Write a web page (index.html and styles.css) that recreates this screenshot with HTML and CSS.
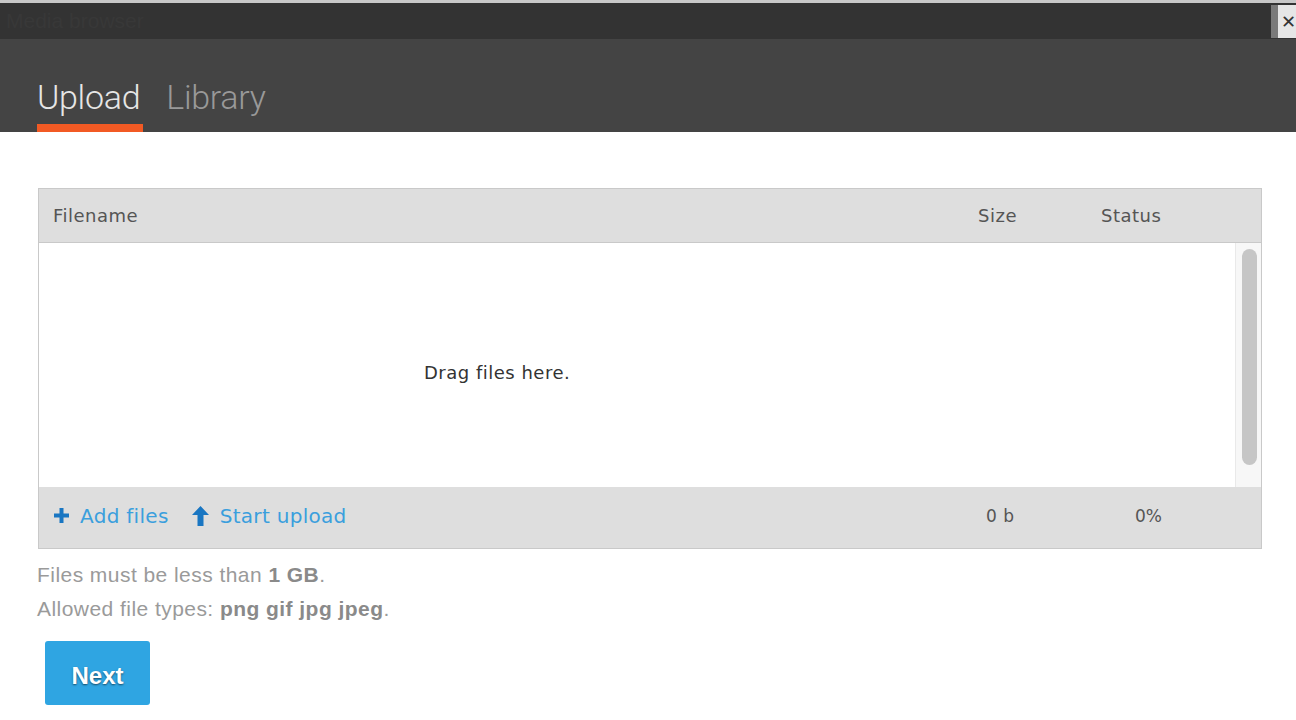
FILE: index.html
```html
<!DOCTYPE html>
<html>
<head>
<meta charset="utf-8">
<link rel="stylesheet" href="styles.css">
</head>
<body>
<div class="topline"></div>
<div class="titlebar">
  <span class="title">Media browser</span>
  <span class="close"><span class="close-x">✕</span></span>
</div>
<div class="header">
  <div class="tab active">Upload</div>
  <div class="tab">Library</div>
</div>
<div class="content">
  <div class="uploader">
    <div class="thead">
      <div class="col-name">Filename</div>
      <div class="col-size">Size</div>
      <div class="col-status">Status</div>
    </div>
    <div class="tbody">
      <div class="drop">Drag files here.</div>
      <div class="scrolltrack"><div class="thumb"></div></div>
    </div>
    <div class="tfoot">
      <div class="actions">
        <a class="action">
          <svg class="ico" width="15" height="15" viewBox="0 0 15 15"><path d="M5.5 0h4v5.5H15v4H9.5V15h-4V9.5H0v-4h5.5z" fill="#1976c2"/></svg>
          Add files
        </a>
        <a class="action">
          <svg class="ico" width="17" height="20" viewBox="0 0 17 20"><path d="M8.5 0L17 9H11.5V20H5.5V9H0z" fill="#1976c2"/></svg>
          Start upload
        </a>
      </div>
      <div class="foot-size">0 b</div>
      <div class="foot-status">0%</div>
    </div>
  </div>
  <p class="note">Files must be less than <b>1 GB</b>.</p>
  <p class="note">Allowed file types: <b>png gif jpg jpeg</b>.</p>
  <button class="next">Next</button>
</div>
</body>
</html>
```
FILE: styles.css
```css
html, body {
  margin: 0;
  padding: 0;
  background: #fff;
}
body {
  font-family: "Liberation Sans", Arial, sans-serif;
  overflow: hidden;
}
.topline {
  height: 3px;
  background: #c8c8c8;
}
.titlebar {
  height: 36px;
  background: #333;
  display: flex;
  justify-content: space-between;
  align-items: flex-start;
}
.title {
  color: #383838;
  font-size: 21px;
  line-height: 36px;
  padding-left: 6px;
}
.close {
  margin-top: 2px;
  width: 18px;
  height: 33px;
  border-left: 7px solid #7a7a7a;
  background: #e6e6e6;
  overflow: hidden;
  display: flex;
  align-items: center;
}
.close-x {
  font-family: "DejaVu Sans", sans-serif;
  font-weight: bold;
  font-size: 18px;
  color: #333;
  margin-left: 3px;
}
.header {
  height: 93px;
  background: #444;
  display: flex;
  align-items: flex-end;
  padding-left: 37px;
  gap: 23px;
  box-sizing: border-box;
}
.tab {
  font-family: Roboto, "Liberation Sans", sans-serif;
  font-weight: 300;
  font-size: 34px;
  letter-spacing: -0.3px;
  line-height: 40px;
  color: #999;
  padding-bottom: 7px;
  padding-right: 3px;
  border-bottom: 8px solid transparent;
}
.tab.active {
  color: #e6e6e6;
  border-bottom-color: #f25a24;
}
.content {
  padding: 56px 34px 0 38px;
}
.uploader {
  width: 1222px;
  border: 1px solid #c9c9c9;
  font-family: "DejaVu Sans", Verdana, sans-serif;
}
.thead {
  height: 53px;
  background: #dedede;
  border-bottom: 1px solid #c9c9c9;
  display: flex;
  align-items: center;
  font-size: 18px;
  letter-spacing: 0.5px;
  color: #555;
}
.col-name {
  flex: 1;
  padding-left: 14px;
}
.col-size {
  width: 123px;
}
.col-status {
  width: 160px;
}
.tbody {
  height: 244px;
  display: flex;
}
.drop {
  flex: 1;
  padding-top: 118px;
  padding-left: 385px;
  font-size: 18px;
  letter-spacing: 0.5px;
  line-height: 24px;
  color: #333;
}
.scrolltrack {
  width: 26px;
  background: #f7f7f7;
  border-left: 1px solid #e9e9e9;
  padding: 6px 5px 0 6px;
  box-sizing: border-box;
}
.thumb {
  width: 15px;
  height: 216px;
  border-radius: 8px;
  background: #c6c6c6;
}
.tfoot {
  height: 61px;
  background: #dedede;
  display: flex;
  align-items: center;
  padding-bottom: 4px;
  box-sizing: border-box;
}
.actions {
  flex: 1;
  display: flex;
  gap: 23px;
  padding-left: 15px;
}
.action {
  color: #3a9fdd;
  font-size: 20px;
  letter-spacing: 0.3px;
  display: flex;
  align-items: center;
  gap: 11px;
}
.foot-size {
  width: 149px;
  font-size: 17px;
  letter-spacing: 0.5px;
  color: #555;
}
.foot-status {
  width: 126px;
  font-size: 17px;
  color: #555;
}
.note {
  margin: 0;
  color: #9a9a9a;
  font-size: 21px;
  letter-spacing: 0.45px;
  line-height: 34px;
  margin-left: -1px;
}
.note:first-of-type {
  margin-top: 9px;
}
.note b {
  color: #8a8a8a;
}
.next {
  margin-top: 15px;
  margin-left: 7px;
  width: 105px;
  height: 64px;
  border: 0;
  border-radius: 3px;
  background: #2fa5e2;
  color: #fff;
  font-family: "Liberation Sans", Arial, sans-serif;
  font-weight: bold;
  font-size: 24px;
  text-shadow: 0 1px 2px rgba(0,0,0,0.55);
  padding: 5px 0 0 0;
}
```
